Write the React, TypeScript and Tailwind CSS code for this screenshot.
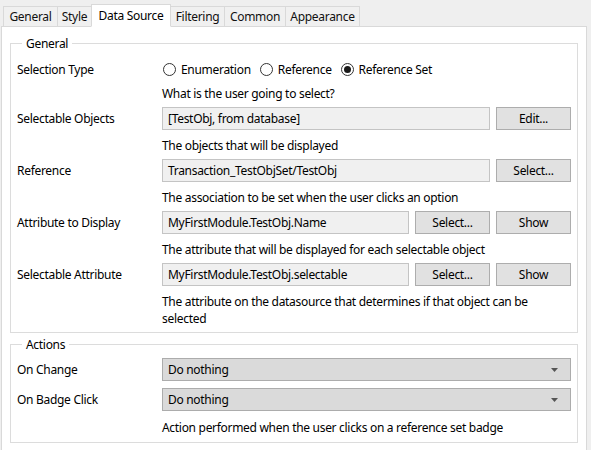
import React from "react";

const font = { fontFamily: '"Noto Sans", "Open Sans", sans-serif' };

function Tab({ label, active, w }: { label: string; active?: boolean; w: string }) {
  if (active) {
    return (
      <div className={`${w} h-[23px] -mb-px mt-[-2px] relative z-10 bg-white border border-[#d9d9d9] border-b-white flex items-center justify-center text-[12px] text-black`}>
        {label}
      </div>
    );
  }
  return (
    <div className={`${w} h-[20px] bg-[#f0f0f0] border border-[#d9d9d9] border-b-0 -ml-px first:ml-0 flex items-center justify-center text-[12px] text-[#111]`}>
      {label}
    </div>
  );
}

function Radio({ checked, label }: { checked?: boolean; label: string }) {
  return (
    <div className="flex items-center gap-[5px]">
      <div className="w-[13px] h-[13px] rounded-full border border-[#333] bg-white flex items-center justify-center">
        {checked && <div className="w-[7px] h-[7px] rounded-full bg-[#1a1a1a]" />}
      </div>
      <span>{label}</span>
    </div>
  );
}

function Input({ value, w }: { value: string; w: string }) {
  return (
    <div className={`${w} h-[23px] bg-[#f0f0f0] border border-[#c4c4c4] flex items-center px-[5px] text-[12px] text-black`}>
      {value}
    </div>
  );
}

function Btn({ label }: { label: string }) {
  return (
    <div className="w-[75px] h-[23px] bg-[#e1e1e1] border border-[#adadad] flex items-center justify-center text-[12px] text-black">
      {label}
    </div>
  );
}

function Help({ children }: { children: React.ReactNode }) {
  return <div className="pl-[145px] pt-[7px] pb-[5px] leading-[17px] text-[12px]">{children}</div>;
}

function Row({ label, children, h = "h-[23px]" }: { label: string; children: React.ReactNode; h?: string }) {
  return (
    <div className={`flex items-center ${h}`}>
      <div className="w-[145px] shrink-0">{label}</div>
      <div className="flex gap-[6px]">{children}</div>
    </div>
  );
}

function Select({ value }: { value: string }) {
  return (
    <div className="w-[409px] h-[23px] bg-[#dadada] border border-[#acacac] flex items-center justify-between pl-[5px] pr-[12px]">
      <span>{value}</span>
      <svg width="7" height="4" viewBox="0 0 7 4">
        <path d="M0 0 L7 0 L3.5 4 Z" fill="#555" />
      </svg>
    </div>
  );
}

export default function App() {
  return (
    <div style={font} className="w-[591px] h-[450px] bg-[#efefef] overflow-hidden text-[12px] tracking-[-0.3px] text-black">
      <div className="flex items-end pl-[3px] pt-[6px]">
        <Tab label="General" w="w-[55px]" />
        <Tab label="Style" w="w-[35px]" />
        <Tab label="Data Source" active w="w-[80px] -ml-px" />
        <Tab label="Filtering" w="w-[55px]" />
        <Tab label="Common" w="w-[62px]" />
        <Tab label="Appearance" w="w-[75px]" />
      </div>
      <div className="ml-px w-[586px] h-[430px] bg-white border border-[#d9d9d9] pl-[8px] pt-[8px]">
        <fieldset className="w-[568px] border border-[#dcdcdc] pl-[6px]">
          <legend className="ml-[5px] px-[4px] leading-[17px]">General</legend>
          <div className="pt-[9px]">
            <Row label="Selection Type" h="h-[17px]">
              <div className="flex gap-[9px] pl-px">
                <Radio label="Enumeration" />
                <Radio label="Reference" />
                <Radio checked label="Reference Set" />
              </div>
            </Row>
            <Help>What is the user going to select?</Help>
            <Row label="Selectable Objects">
              <Input value="[TestObj, from database]" w="w-[328px]" />
              <Btn label="Edit..." />
            </Row>
            <Help>The objects that will be displayed</Help>
            <Row label="Reference">
              <Input value="Transaction_TestObjSet/TestObj" w="w-[328px]" />
              <Btn label="Select..." />
            </Row>
            <Help>The association to be set when the user clicks an option</Help>
            <Row label="Attribute to Display">
              <Input value="MyFirstModule.TestObj.Name" w="w-[247px]" />
              <Btn label="Select..." />
              <Btn label="Show" />
            </Row>
            <Help>The attribute that will be displayed for each selectable object</Help>
            <Row label="Selectable Attribute">
              <Input value="MyFirstModule.TestObj.selectable" w="w-[247px]" />
              <Btn label="Select..." />
              <Btn label="Show" />
            </Row>
            <Help>
              The attribute on the datasource that determines if that object can be
              <br />
              selected
            </Help>
          </div>
        </fieldset>
        <fieldset className="mt-[3px] w-[568px] border border-[#dcdcdc] pl-[6px]">
          <legend className="ml-[5px] px-[4px] leading-[17px]">Actions</legend>
          <div className="pt-[5px] flex flex-col gap-[7px]">
            <Row label="On Change">
              <Select value="Do nothing" />
            </Row>
            <Row label="On Badge Click">
              <Select value="Do nothing" />
            </Row>
          </div>
          <div className="pl-[145px] pt-[8px] pb-[6px] leading-[17px]">
            Action performed when the user clicks on a reference set badge
          </div>
        </fieldset>
      </div>
    </div>
  );
}
